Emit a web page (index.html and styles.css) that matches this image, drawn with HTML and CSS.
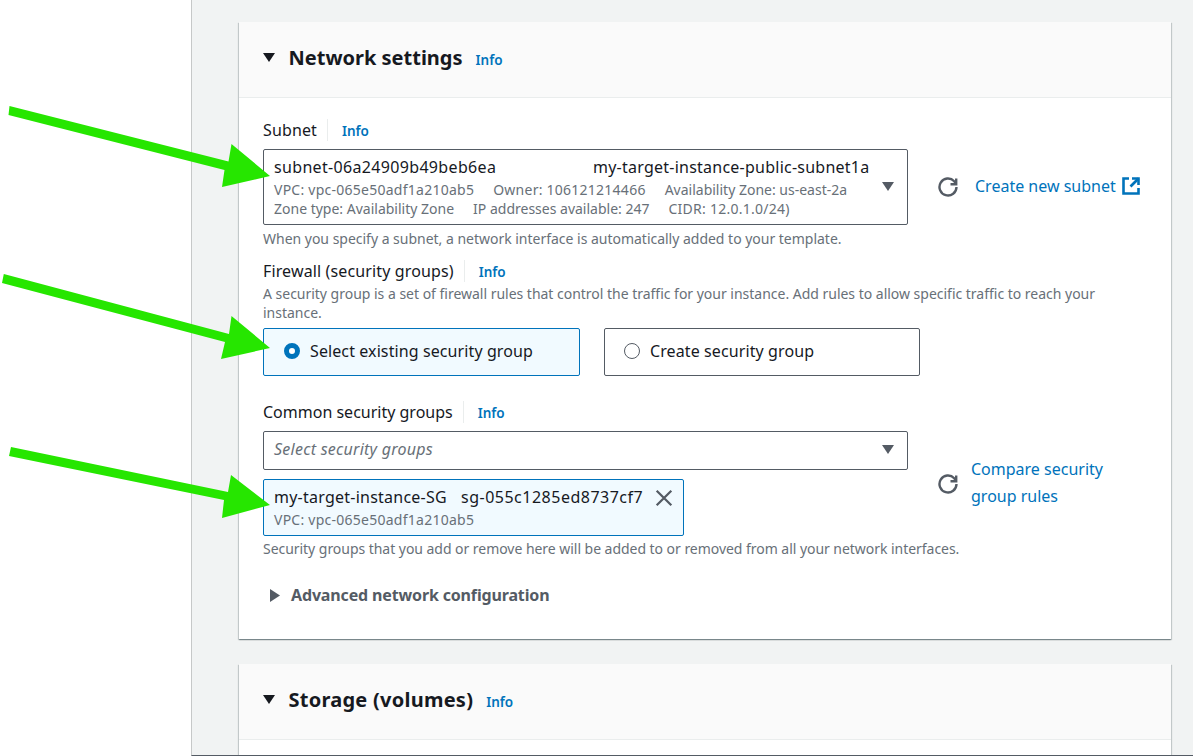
FILE: index.html
```html
<!DOCTYPE html>
<html lang="en">
<head>
<meta charset="utf-8">
<title>Network settings</title>
<link rel="stylesheet" href="styles.css">
</head>
<body>
<div class="page">
  <aside class="sidebar"></aside>
  <main class="content">
    <section class="card network">
      <header class="card-head">
        <svg class="caret-down" viewBox="0 0 12 10"><path d="M0 0h12L6 9z"/></svg>
        <h2>Network settings</h2>
        <a class="info head-info">Info</a>
      </header>
      <div class="card-body">
        <div class="label-row"><span class="label label-wide">Subnet</span><a class="info field-info">Info</a></div>
        <div class="select-row">
          <div class="select subnet-select">
            <div class="opt-main"><span class="subnet-id hex">subnet-06a24909b49beb6ea</span><span class="wide">my-target-instance-public-subnet1a</span></div>
            <div class="opt-tags"><span class="tag-id">VPC: vpc-065e50adf1a210ab5</span><span class="tag-id">Owner: 106121214466</span><span>Availability Zone: us-east-2a</span></div>
            <div class="opt-tags"><span>Zone type: Availability Zone</span><span>IP addresses available: 247</span><span class="tag-id">CIDR: 12.0.1.0/24)</span></div>
            <svg class="select-caret" viewBox="0 0 12 10"><path d="M0 0h12L6 9z"/></svg>
          </div>
          <svg class="refresh subnet-refresh" viewBox="0 0 20 20"><path d="M18.5 10A8.5 8.5 0 1 1 16.2 4.2L18 6.5"/><path d="M18.2 1.5v5.7h-5.7"/></svg>
          <a class="link subnet-link">Create new subnet</a>
          <svg class="external" viewBox="0 0 18 18"><path d="M7 1.5H1.5v15h15V11"/><path d="M10 1.5h6.5V8"/><path d="M16.5 1.5L8.5 9.5"/></svg>
        </div>
        <p class="hint after-subnet">When you specify a subnet, a network interface is automatically added to your template.</p>
        <div class="label-row firewall-label"><span class="label label-wide">Firewall (security groups)</span><a class="info field-info">Info</a></div>
        <p class="hint desc">A security group is a set of firewall rules that control the traffic for your instance. Add rules to allow specific traffic to reach your instance.</p>
        <div class="tiles">
          <div class="tile tile-on"><span class="radio radio-on"></span>Select existing security group</div>
          <div class="tile"><span class="radio"></span>Create security group</div>
        </div>
        <div class="label-row common-label"><span class="label">Common security groups</span><a class="info field-info">Info</a></div>
        <div class="sg-row">
          <div class="sg-col">
            <div class="select sg-select"><span class="placeholder">Select security groups</span><svg class="select-caret" viewBox="0 0 12 10"><path d="M0 0h12L6 9z"/></svg></div>
            <div class="token">
              <div class="token-text">
                <div class="opt-main"><span class="sg-name wide">my-target-instance-SG</span><span class="sg-id">sg-055c1285ed8737cf7</span></div>
                <div class="opt-tags"><span class="tag-id">VPC: vpc-065e50adf1a210ab5</span></div>
              </div>
              <svg class="close" viewBox="0 0 16 16"><path d="M1.5 1.5l13 13M14.5 1.5l-13 13"/></svg>
            </div>
          </div>
          <svg class="refresh sg-refresh" viewBox="0 0 20 20"><path d="M18.5 10A8.5 8.5 0 1 1 16.2 4.2L18 6.5"/><path d="M18.2 1.5v5.7h-5.7"/></svg>
          <a class="link compare">Compare security group rules</a>
        </div>
        <p class="hint after-sg">Security groups that you add or remove here will be added to or removed from all your network interfaces.</p>
        <div class="advanced"><svg class="caret-right" viewBox="0 0 10 13"><path d="M0 0v13l10-6.5z"/></svg><span>Advanced network configuration</span></div>
      </div>
    </section>
    <section class="card storage">
      <header class="card-head">
        <svg class="caret-down" viewBox="0 0 12 10"><path d="M0 0h12L6 9z"/></svg>
        <h2 class="storage-title">Storage (volumes)</h2>
        <a class="info head-info">Info</a>
      </header>
    </section>
  </main>
</div>
<svg class="arrows" viewBox="0 0 1193 756">
  <path class="arrow-shape" d="M9.5 106L228.5 161.5L231.5 144L270 176L222 187L224.5 170L8.5 115z"/>
  <path class="arrow-shape" d="M3.8 274L229 334L231.5 316L270 348L221 359L225 342L2 283z"/>
  <path class="arrow-shape" d="M11 447L228 492L231 475L270 505L222 518L224 500L9 456z"/>
</svg>
</body>
</html>
```
FILE: styles.css
```css
* { box-sizing: border-box; }
html, body { margin: 0; padding: 0; height: 100%; overflow: hidden; }
body { font-family: "Noto Sans", sans-serif; font-size: 14px; color: #16191f; background: #fff; }
.page { display: flex; height: 756px; }
.sidebar { width: 191px; flex: none; background: #fff; }
.content { flex: 1; background: #f1f3f3; border-left: 1px solid #c6c8c8; border-bottom: 1px solid #545b64; padding: 22px 22px 0 47px; overflow: hidden; }
.card { background: #fff; box-shadow: 0 1px 1px 0 rgba(0,28,36,.3), 1px 1px 1px 0 rgba(0,28,36,.15), -1px 1px 1px 0 rgba(0,28,36,.15); }
.network { height: 617px; }
.storage { margin-top: 25px; height: 120px; }
.card-head { height: 76px; background: #fafafa; border-bottom: 1px solid #eaeded; display: flex; align-items: center; padding: 0 0 4px 24px; }
.caret-down { width: 12px; height: 10px; fill: #16191f; flex: none; }
.card-head h2 { margin: 0 0 0 13.5px; font-size: 20px; line-height: 28px; font-weight: 700; color: #16191f; }
.card-head .storage-title { letter-spacing: .25px; }
.info { color: #0073bb; font-size: 13.5px; font-weight: 600; line-height: 18px; }
.head-info { margin: 4px 0 0 13px; }
.field-info { padding-top: 2px; }
.card-body { padding: 21px 24px 0; }
.label-row { display: flex; align-items: center; height: 22px; }
.label { font-size: 16px; line-height: 22px; padding-right: 10px; border-right: 1px solid #eaeded; margin-right: 14px; }
.label-wide { letter-spacing: .13px; }
.select-row { display: flex; align-items: center; margin-top: 8px; }
.select { position: relative; width: 645px; background: #fff; border: 1px solid #545b64; border-radius: 2px; flex: none; }
.subnet-select { height: 76px; padding: 5px 10px; }
.opt-main { display: flex; font-size: 16px; line-height: 25px; white-space: nowrap; }
.hex { letter-spacing: .33px; }
.wide { letter-spacing: .24px; }
.subnet-id { width: 319px; }
.opt-tags { display: flex; font-size: 14px; line-height: 19px; color: #687078; white-space: nowrap; gap: 19px; }
.tag-id { letter-spacing: .25px; }
.select-caret { position: absolute; right: 13px; width: 12px; height: 10px; fill: #545b64; }
.subnet-select .select-caret { top: 32px; }
.refresh { fill: none; stroke: #545b64; stroke-width: 2.4; flex: none; width: 20px; height: 20px; }
.subnet-refresh { margin: 0 17px 1px 30px; }
.link { color: #0073bb; font-size: 16px; line-height: 27px; }
.subnet-link { margin-bottom: 2px; }
.external { width: 18px; height: 18px; margin: 0 0 2px 6px; fill: none; stroke: #0073bb; stroke-width: 2.6; flex: none; }
.hint { margin: 0; font-size: 14px; line-height: 19px; color: #687078; letter-spacing: -.015px; }
.after-subnet { margin-top: 4px; }
.firewall-label { margin-top: 12px; }
.desc { margin-top: 2px; width: 860px; }
.tiles { display: flex; gap: 24px; margin-top: 6px; }
.tile { width: 316px; height: 48px; border: 1px solid #545b64; border-radius: 2px; display: flex; align-items: center; padding: 0 0 2px 19px; font-size: 16px; letter-spacing: .1px; }
.tile-on { width: 317px; background: #f1faff; border-color: #0073bb; padding-left: 20px; }
.radio { width: 16px; height: 16px; border-radius: 50%; border: 1px solid #545b64; margin-right: 10px; background: #fff; flex: none; }
.radio-on { border: 5px solid #0073bb; }
.common-label { margin-top: 25px; }
.sg-row { display: flex; align-items: flex-start; margin-top: 8px; }
.sg-col { width: 645px; flex: none; }
.sg-select { height: 39px; padding: 5px 10px; }
.sg-select .select-caret { top: 13px; }
.placeholder { font-style: italic; color: #687078; font-size: 16px; line-height: 24px; letter-spacing: .25px; }
.token { display: flex; align-items: flex-start; width: 421px; height: 57px; margin-top: 9px; padding: 5px 10px; background: #f1faff; border: 1px solid #0073bb; border-radius: 2px; }
.token-text { flex: 1; }
.sg-name { width: 187px; }
.sg-id { letter-spacing: .5px; }
.close { width: 18px; height: 18px; fill: none; stroke: #545b64; stroke-width: 2; margin: 4px 0 0; flex: none; }
.sg-refresh { margin: 43px 13px 0 30px; }
.compare { width: 160px; margin-top: 25px; display: block; }
.after-sg { margin-top: 3px; letter-spacing: -.04px; }
.advanced { display: flex; align-items: center; margin-top: 26px; height: 22px; font-size: 16px; font-weight: 700; color: #545b64; padding-left: 7px; letter-spacing: -.15px; }
.caret-right { width: 10px; height: 13px; fill: #545b64; margin-right: 11px; flex: none; }
.arrows { position: absolute; left: 0; top: 0; width: 1193px; height: 756px; pointer-events: none; }
.arrow-shape { fill: #26e600; }
```
